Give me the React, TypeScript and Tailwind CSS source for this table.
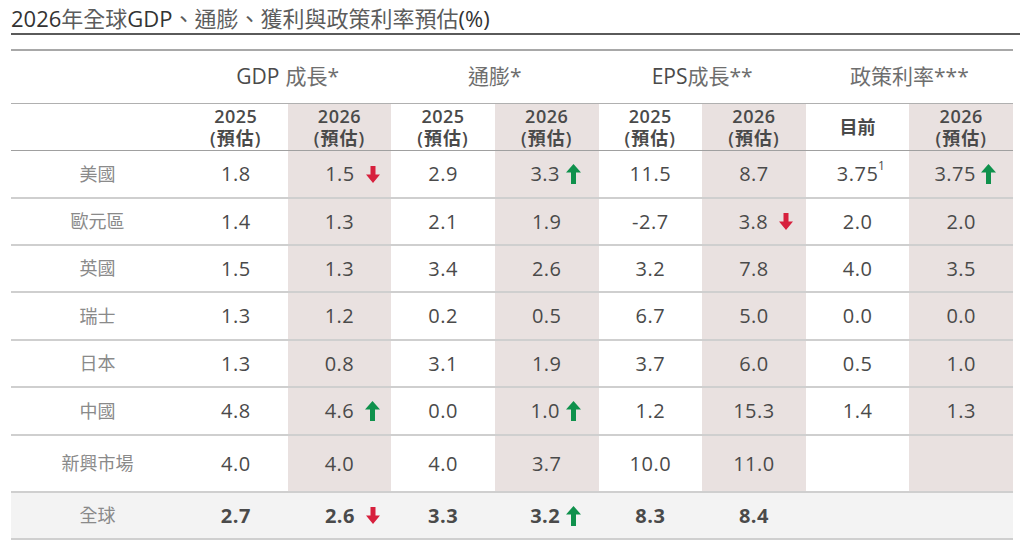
import React from "react";

type Dir = "up" | "down" | null;

interface Cell {
  v: string;
  dir?: Dir;
  sup?: string;
}

interface Row {
  label: string;
  cells: Cell[];
  h: string;
}

// column index → arrow offset (gap + left pad), to mimic the source's placement
const ARROW_PAD: Record<number, string> = {
  1: "gap-[11px] pl-[26px]",
  3: "gap-[6px] pl-[18px]",
  5: "gap-[11px] pl-[24px]",
  7: "gap-[5px] pl-[8px]",
};

const rows: Row[] = [
  {
    label: "美國",
    h: "h-[48px]",
    cells: [
      { v: "1.8" },
      { v: "1.5", dir: "down" },
      { v: "2.9" },
      { v: "3.3", dir: "up" },
      { v: "11.5" },
      { v: "8.7" },
      { v: "3.75", sup: "1" },
      { v: "3.75", dir: "up" },
    ],
  },
  {
    label: "歐元區",
    h: "h-[47px]",
    cells: [
      { v: "1.4" },
      { v: "1.3" },
      { v: "2.1" },
      { v: "1.9" },
      { v: "-2.7" },
      { v: "3.8", dir: "down" },
      { v: "2.0" },
      { v: "2.0" },
    ],
  },
  {
    label: "英國",
    h: "h-[47px]",
    cells: [
      { v: "1.5" },
      { v: "1.3" },
      { v: "3.4" },
      { v: "2.6" },
      { v: "3.2" },
      { v: "7.8" },
      { v: "4.0" },
      { v: "3.5" },
    ],
  },
  {
    label: "瑞士",
    h: "h-[48px]",
    cells: [
      { v: "1.3" },
      { v: "1.2" },
      { v: "0.2" },
      { v: "0.5" },
      { v: "6.7" },
      { v: "5.0" },
      { v: "0.0" },
      { v: "0.0" },
    ],
  },
  {
    label: "日本",
    h: "h-[47px]",
    cells: [
      { v: "1.3" },
      { v: "0.8" },
      { v: "3.1" },
      { v: "1.9" },
      { v: "3.7" },
      { v: "6.0" },
      { v: "0.5" },
      { v: "1.0" },
    ],
  },
  {
    label: "中國",
    h: "h-[48px]",
    cells: [
      { v: "4.8" },
      { v: "4.6", dir: "up" },
      { v: "0.0" },
      { v: "1.0", dir: "up" },
      { v: "1.2" },
      { v: "15.3" },
      { v: "1.4" },
      { v: "1.3" },
    ],
  },
  {
    label: "新興市場",
    h: "h-[57px]",
    cells: [
      { v: "4.0" },
      { v: "4.0" },
      { v: "4.0" },
      { v: "3.7" },
      { v: "10.0" },
      { v: "11.0" },
      { v: "" },
      { v: "" },
    ],
  },
];

const total: Cell[] = [
  { v: "2.7" },
  { v: "2.6", dir: "down" },
  { v: "3.3" },
  { v: "3.2", dir: "up" },
  { v: "8.3" },
  { v: "8.4" },
  { v: "" },
  { v: "" },
];

const GRID = "grid grid-cols-[173px_repeat(8,1fr)]";

function Arrow({ dir }: { dir: Dir }) {
  if (dir === "down") {
    return (
      <svg width="14" height="17" viewBox="0 0 14 17" className="shrink-0">
        <polygon points="4.5,0 9.5,0 9.5,8.5 14,8.5 7,17 0,8.5 4.5,8.5" fill="#d7203d" />
      </svg>
    );
  }
  return (
    <svg width="15" height="20" viewBox="0 0 15 20" className="shrink-0">
      <polygon points="7.5,0 15,8.5 10,8.5 10,20 5,20 5,8.5 0,8.5" fill="#0f914c" />
    </svg>
  );
}

function ValueCell({ c, i, bold }: { c: Cell; i: number; bold?: boolean }) {
  const shaded = i % 2 === 1;
  return (
    <div
      className={`flex items-center justify-center ${shaded && !bold ? "bg-[#e9e1e0]" : ""} ${
        c.dir ? ARROW_PAD[i] : ""
      }`}
    >
      <span className={`relative text-[20px] tracking-[0.5px] text-[#4a4a4a] ${bold ? "font-bold" : ""}`}>
        {c.v}
        {c.sup && <span className="absolute -right-[7px] top-[1px] text-[12px] leading-none">{c.sup}</span>}
      </span>
      {c.dir && <Arrow dir={c.dir} />}
    </div>
  );
}

function YearHead({ year, shaded }: { year?: string; shaded: boolean }) {
  return (
    <div
      className={`flex flex-col items-center justify-center text-[18px] font-semibold leading-[22px] text-[#4a4a4a] ${
        shaded ? "bg-[#e9e1e0]" : ""
      }`}
    >
      {year ? (
        <>
          <span className="tracking-[0.5px]">{year}</span>
          <span className="tracking-[1px]">(預估)</span>
        </>
      ) : (
        <span>目前</span>
      )}
    </div>
  );
}

export default function App() {
  return (
    <div
      className="h-[547px] w-[1024px] bg-white px-[11px] pt-[5px]"
      style={{ fontFamily: '"Open Sans", "Noto Sans CJK TC", sans-serif' }}
    >
      {/* Title */}
      <div className="mr-[-7px] h-[30px] border-b-2 border-[#5a5a5a]">
        <h1 className="text-[22px] leading-[27px] text-[#333]">
          2026<span className="text-[#5c5c5c]">年全球</span>GDP
          <span className="text-[#5c5c5c]">、通膨、獲利與政策利率預估</span>(%)
        </h1>
      </div>

      {/* Table */}
      <div className="mt-[14px] w-[1002px] border-t-2 border-[#a8a8a8]">
        {/* Group header */}
        <div className={`${GRID} h-[53px] border-b border-[#b0b0b0] text-[21px]`}>
          <div />
          <div className="col-span-2 flex items-center justify-center gap-[6px]">
            <span className="text-[#4a4a4a]">GDP</span>
            <span className="text-[#6e6e6e]">成長*</span>
          </div>
          <div className="col-span-2 flex items-center justify-center text-[#6e6e6e]">通膨*</div>
          <div className="col-span-2 flex items-center justify-center">
            <span className="text-[#4a4a4a]">EPS</span>
            <span className="text-[#6e6e6e]">成長**</span>
          </div>
          <div className="col-span-2 flex items-center justify-center text-[#6e6e6e]">政策利率***</div>
        </div>

        {/* Year header */}
        <div className={`${GRID} h-[47px] border-b border-[#a0a0a0]`}>
          <div />
          <YearHead year="2025" shaded={false} />
          <YearHead year="2026" shaded />
          <YearHead year="2025" shaded={false} />
          <YearHead year="2026" shaded />
          <YearHead year="2025" shaded={false} />
          <YearHead year="2026" shaded />
          <YearHead shaded={false} />
          <YearHead year="2026" shaded />
        </div>

        {/* Body */}
        {rows.map((r) => (
          <div key={r.label} className={`${GRID} ${r.h} border-b-2 border-[#cfcfcf]`}>
            <div className="flex items-center justify-center text-[18px] text-[#8a8a8a]">{r.label}</div>
            {r.cells.map((c, i) => (
              <ValueCell key={i} c={c} i={i} />
            ))}
          </div>
        ))}

        {/* Total */}
        <div className={`${GRID} h-[47px] border-b-2 border-[#cfcfcf] bg-[#f3f3f3]`}>
          <div className="flex items-center justify-center text-[18px] text-[#8a8a8a]">全球</div>
          {total.map((c, i) => (
            <ValueCell key={i} c={c} i={i} bold />
          ))}
        </div>
      </div>
    </div>
  );
}
